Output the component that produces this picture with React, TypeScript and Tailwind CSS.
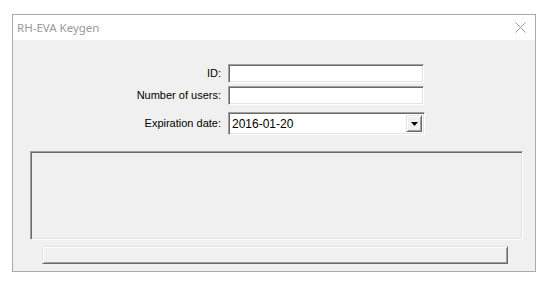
import React from "react";

const sunken =
  "border border-t-[#a0a0a0] border-l-[#a0a0a0] border-r-white border-b-white shadow-[inset_1px_1px_0_#696969,inset_-1px_-1px_0_#e3e3e3]";
const raised =
  "border border-t-[#e3e3e3] border-l-[#e3e3e3] border-r-[#696969] border-b-[#696969] shadow-[inset_1px_1px_0_#ffffff,inset_-1px_-1px_0_#a0a0a0]";

const Row = ({ label, top, children }: { label: string; top: string; children: React.ReactNode }) => (
  <div className={`flex items-center ${top}`}>
    <div className="w-[209px] text-right pr-[1px] text-[11px] text-black">{label}</div>
    <div className="ml-[6px]">{children}</div>
  </div>
);

const App = () => {
  return (
    <div
      className="w-[552px] h-[296px] bg-white pt-[14px] pl-[12px]"
      style={{ fontFamily: "Tahoma, 'Liberation Sans', sans-serif" }}
    >
      <div className="w-[524px] h-[258px] border border-[#aaaaaa] flex flex-col">
        {/* title bar */}
        <div className="h-[25px] bg-white flex items-center justify-between pl-[4px] pr-[9px]">
          <span
            className="text-[11.5px] text-[#999999]"
            style={{ fontFamily: "'Noto Sans', 'Open Sans', sans-serif" }}
          >
            RH-EVA Keygen
          </span>
          <svg width="11" height="11" viewBox="0 0 11 11" className="text-[#9a9a9a]">
            <path d="M0.5 0.5 L10.5 10.5 M10.5 0.5 L0.5 10.5" stroke="currentColor" strokeWidth="1" />
          </svg>
        </div>

        {/* body */}
        <div className="flex-1 bg-[#f0f0f0] pt-[24px]">
          <Row label="ID:" top="">
            <div className={`w-[196px] h-[19px] bg-white ${sunken}`} />
          </Row>
          <Row label="Number of users:" top="mt-[3px]">
            <div className={`w-[196px] h-[19px] bg-white ${sunken}`} />
          </Row>
          <Row label="Expiration date:" top="mt-[7px]">
            <div className={`w-[197px] h-[23px] bg-white flex items-center p-[2px] ${sunken}`}>
              <span className="flex-1 pl-[1px] text-[12px] text-black">2016-01-20</span>
              <div className={`w-[16px] h-full bg-[#f0f0f0] flex items-center justify-center ${raised}`}>
                <svg width="7" height="4" viewBox="0 0 7 4">
                  <path d="M0 0 H7 L3.5 4 Z" fill="#000" />
                </svg>
              </div>
            </div>
          </Row>

          {/* output panel */}
          <div className={`mt-[16px] ml-[17px] w-[493px] h-[89px] bg-[#f0f0f0] ${sunken}`} />

          {/* button bar */}
          <div className={`mt-[6px] ml-[29px] w-[466px] h-[18px] bg-[#f0f0f0] ${raised}`} />
        </div>
      </div>
    </div>
  );
};

export default App;
